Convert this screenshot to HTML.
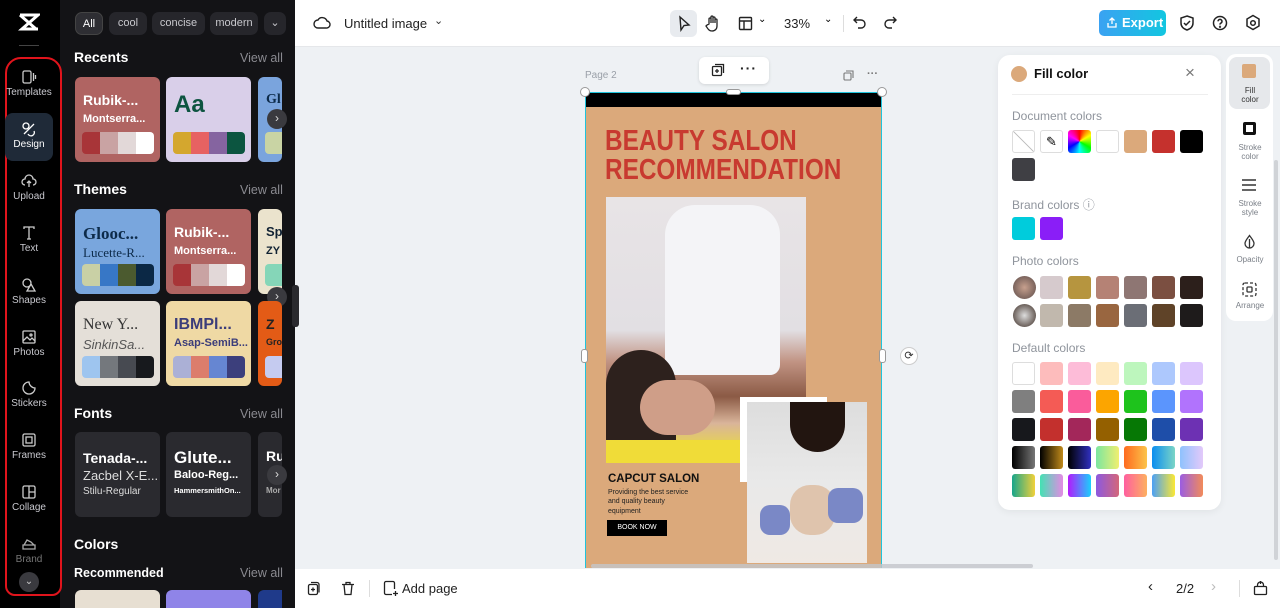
<!DOCTYPE html>
<html style="width:1280px;height:608px;overflow:hidden"><head><meta charset="utf-8"><style>
*{margin:0;padding:0;box-sizing:border-box}
body{width:1280px;height:608px;overflow:hidden;position:relative;font-family:"Liberation Sans",sans-serif;background:#eef1f4}
.a{position:absolute}
.rail{left:0;top:0;width:60px;height:608px;background:#000}
.panel{left:60px;top:0;width:235px;height:608px;background:#131316}
.ri{position:absolute;left:4px;width:50px;text-align:center;color:#c9c9cf;font-size:10px}
.ri svg{display:block;margin:0 auto 2px}
.chip{position:absolute;top:12px;height:23px;border-radius:7px;background:#26262b;color:#c8c8cd;font-size:11px;line-height:23px;text-align:center}
.h{position:absolute;left:74px;color:#fff;font-weight:bold;font-size:14px}
.va{position:absolute;left:240px;color:#8a8a90;font-size:12.5px}
.card{position:absolute;width:85px;height:85px;border-radius:6px;overflow:hidden}
.card .t1{position:absolute;left:8px;top:15px;font-weight:bold;font-size:14px;white-space:nowrap}
.card .t2{position:absolute;left:8px;top:36px;font-size:11px;white-space:nowrap;font-weight:bold}
.pal{position:absolute;left:7px;top:55px;width:72px;height:22px;border-radius:4px;overflow:hidden;display:flex}
.pal i{flex:1}
.arr{position:absolute;width:20px;height:20px;border-radius:50%;background:#3a3a3f;color:#ddd;font-size:12px;text-align:center;line-height:19px}
.top{left:295px;top:0;width:985px;height:47px;background:#fff;border-bottom:1px solid #e5e7ea}
.bot{left:295px;top:569px;width:985px;height:39px;background:#fff}
.sw{position:absolute;width:23px;height:23px;border-radius:3px}
.lbl{position:absolute;left:1012px;color:#8f949c;font-size:12px}
.tool{position:absolute;left:1229px;width:42px;text-align:center;font-size:8px;color:#7a7f87;line-height:9px}
</style></head><body>
<div class="a rail"></div>
<div class="a panel"></div>
<svg class="a" style="left:18px;top:13px" width="22" height="18" viewBox="0 0 22 18"><path d="M2 2h18l-16 14h16M2 2l16 14M20 2L4 16" stroke="#fff" stroke-width="3" fill="none"/></svg>
<div class="a" style="left:19px;top:45px;width:20px;height:1px;background:#444"></div>
<div class="a" style="left:5px;top:57px;width:57px;height:539px;border:2px solid #e0141c;border-radius:16px 16px 10px 10px"></div>
<div class="a" style="left:5px;top:113px;width:48px;height:48px;background:#1f2a38;border-radius:8px"></div>
<div class="ri" style="top:69px"><svg width="16" height="16" viewBox="0 0 16 16" fill="none" stroke="#ccc" stroke-width="1.3"><rect x="2" y="2" width="8" height="12" rx="1.5"/><path d="M12.5 4v8M14.5 6v4"/></svg>Templates</div>
<div class="ri" style="top:121px;color:#fff"><svg width="16" height="16" viewBox="0 0 16 16" fill="none" stroke="#fff" stroke-width="1.3"><circle cx="5" cy="5" r="3"/><path d="M3 13l10-10M7 13a3 3 0 1 0 6-3"/></svg>Design</div>
<div class="ri" style="top:173px"><svg width="16" height="16" viewBox="0 0 16 16" fill="none" stroke="#ccc" stroke-width="1.3"><path d="M4 12a3 3 0 0 1 0-6 4 4 0 0 1 8 0 3 3 0 0 1 0 6M8 14V8M6 10l2-2 2 2"/></svg>Upload</div>
<div class="ri" style="top:225px"><svg width="16" height="16" viewBox="0 0 16 16" fill="none" stroke="#ccc" stroke-width="1.3"><path d="M3 4V2h10v2M8 2v12M6 14h4"/></svg>Text</div>
<div class="ri" style="top:277px"><svg width="16" height="16" viewBox="0 0 16 16" fill="none" stroke="#ccc" stroke-width="1.3"><circle cx="6" cy="6" r="4"/><path d="M10 7l4 7H6z"/></svg>Shapes</div>
<div class="ri" style="top:329px"><svg width="16" height="16" viewBox="0 0 16 16" fill="none" stroke="#ccc" stroke-width="1.3"><rect x="2" y="2" width="12" height="12" rx="1"/><path d="M2 12l4-4 3 3 2-2 3 3"/><circle cx="10" cy="6" r="1"/></svg>Photos</div>
<div class="ri" style="top:380px"><svg width="16" height="16" viewBox="0 0 16 16" fill="none" stroke="#ccc" stroke-width="1.3"><path d="M8 2a6 6 0 1 0 6 6c-3 0-6-3-6-6z"/></svg>Stickers</div>
<div class="ri" style="top:432px"><svg width="16" height="16" viewBox="0 0 16 16" fill="none" stroke="#ccc" stroke-width="1.3"><rect x="2" y="2" width="12" height="12" rx="1.5"/><rect x="5" y="5" width="6" height="6"/></svg>Frames</div>
<div class="ri" style="top:484px"><svg width="16" height="16" viewBox="0 0 16 16" fill="none" stroke="#ccc" stroke-width="1.3"><rect x="2" y="2" width="12" height="12" rx="1.5"/><path d="M8 2v12M8 8h6"/></svg>Collage</div>
<div class="ri" style="top:536px;color:#777"><svg width="16" height="16" viewBox="0 0 16 16" fill="none" stroke="#aaa" stroke-width="1.3"><path d="M2 9h12v4H2zM3 9l3-5 4 2 3 3"/></svg>Brand</div>
<div class="a" style="left:19px;top:572px;width:20px;height:20px;border-radius:50%;background:#3a3a3f;color:#ccc;font-size:10px;text-align:center;line-height:20px">⌄</div>

<div class="chip" style="left:75px;width:28px;background:#2e2e33;border:1px solid #444;color:#fff">All</div>
<div class="chip" style="left:109px;width:38px">cool</div>
<div class="chip" style="left:152px;width:53px">concise</div>
<div class="chip" style="left:210px;width:48px;overflow:hidden">modern</div>
<div class="chip" style="left:264px;width:22px">⌄</div>

<div class="h" style="top:49px">Recents</div><div class="va" style="top:51px">View all</div>
<div class="card" style="left:75px;top:77px;background:#b06462;color:#fff"><div class="t1">Rubik-...</div><div class="t2">Montserra...</div><div class="pal"><i style="background:#a83538"></i><i style="background:#c9a3a3"></i><i style="background:#e2d8d8"></i><i style="background:#fff"></i></div></div>
<div class="card" style="left:166px;top:77px;background:#d9cfe9;color:#0d5440"><div class="t1" style="font-size:24px;top:14px">Aa</div><div class="pal"><i style="background:#d4a72e"></i><i style="background:#e76262"></i><i style="background:#8564a0"></i><i style="background:#0c5540"></i></div></div>
<div class="card" style="left:258px;top:77px;width:24px;background:#7aa4dd;color:#0d2b4a"><div class="t1" style="font-family:'Liberation Serif'">Gl</div><div class="pal" style="background:#c9d4a4"></div></div>
<div class="arr" style="left:267px;top:109px">›</div>

<div class="h" style="top:181px">Themes</div><div class="va" style="top:183px">View all</div>
<div class="card" style="left:75px;top:209px;background:#79a6dd;color:#0d2b4a"><div class="t1" style="font-family:'Liberation Serif';font-size:17px">Glooc...</div><div class="t2" style="font-family:'Liberation Serif';font-weight:normal;font-size:13px">Lucette-R...</div><div class="pal"><i style="background:#c9d0a5"></i><i style="background:#3777c6"></i><i style="background:#4b5a2f"></i><i style="background:#0b2845"></i></div></div>
<div class="card" style="left:166px;top:209px;background:#b06462;color:#fff"><div class="t1">Rubik-...</div><div class="t2">Montserra...</div><div class="pal"><i style="background:#a83538"></i><i style="background:#c9a3a3"></i><i style="background:#e2d8d8"></i><i style="background:#fff"></i></div></div>
<div class="card" style="left:258px;top:209px;width:24px;background:#ebe3cd;color:#123"><div class="t1" style="font-size:13px">Sp</div><div class="t2">ZY</div><div class="pal" style="background:#85d6b8"></div></div>
<div class="arr" style="left:267px;top:287px">›</div>
<div class="card" style="left:75px;top:301px;background:#e4dfd8;color:#333"><div class="t1" style="font-family:'Liberation Serif';font-weight:normal;font-size:16px">New Y...</div><div class="t2" style="font-style:italic;font-weight:normal;font-size:13px;color:#555">SinkinSa...</div><div class="pal"><i style="background:#9ec5ef"></i><i style="background:#74787d"></i><i style="background:#474a51"></i><i style="background:#17191d"></i></div></div>
<div class="card" style="left:166px;top:301px;background:#efd9a4;color:#3b3d7a"><div class="t1" style="font-size:16px">IBMPl...</div><div class="t2">Asap-SemiB...</div><div class="pal"><i style="background:#abb0d6"></i><i style="background:#dc7d6c"></i><i style="background:#6686d2"></i><i style="background:#3c3f7c"></i></div></div>
<div class="card" style="left:258px;top:301px;width:24px;background:#e35b16;color:#222"><div class="t1">Z</div><div class="t2" style="font-size:9px">Gro</div><div class="pal" style="background:#c5cbf0"></div></div>

<div class="h" style="top:405px">Fonts</div><div class="va" style="top:407px">View all</div>
<div class="card" style="left:75px;top:432px;background:#2a2a2f;color:#fff"><div class="t1" style="top:18px">Tenada-...</div><div class="t2" style="font-weight:normal;font-size:13px;top:36px;color:#ddd">Zacbel X-E...</div><div class="t2" style="font-weight:normal;font-size:10px;top:54px;color:#ddd">Stilu-Regular</div></div>
<div class="card" style="left:166px;top:432px;background:#2a2a2f;color:#fff"><div class="t1" style="top:16px;font-size:17px">Glute...</div><div class="t2" style="top:37px">Baloo-Reg...</div><div class="t2" style="top:54px;font-size:7.5px">HammersmithOn...</div></div>
<div class="card" style="left:258px;top:432px;width:24px;background:#2a2a2f;color:#fff"><div class="t1" style="top:16px">Ru</div><div class="t2" style="top:54px;font-size:8px;color:#aaa">Mor</div></div>
<div class="arr" style="left:267px;top:465px">›</div>

<div class="h" style="top:536px">Colors</div>
<div class="h" style="top:566px;font-size:12.5px">Recommended</div><div class="va" style="top:566px">View all</div>
<div class="card" style="left:75px;top:590px;height:18px;border-radius:6px 6px 0 0;background:#e7dfd2"></div>
<div class="card" style="left:166px;top:590px;height:18px;border-radius:6px 6px 0 0;background:#8f84e8"></div>
<div class="card" style="left:258px;top:590px;height:18px;width:24px;border-radius:6px 0 0 0;background:#1f3a8a"></div>
<div class="a" style="left:292px;top:285px;width:7px;height:42px;background:#2a2a2e;border-radius:3px"></div>

<div class="a top"></div>
<svg class="a" style="left:313px;top:15px" width="18" height="16" viewBox="0 0 18 16" fill="none" stroke="#222" stroke-width="1.4"><path d="M5 13a4 4 0 0 1 0-8 5 5 0 0 1 9 1 3.5 3.5 0 0 1-1 7z"/></svg>
<div class="a" style="left:344px;top:16px;font-size:13px;color:#222">Untitled image</div>
<div class="a" style="left:434px;top:14px;font-size:11px;color:#333">⌄</div>
<div class="a" style="left:670px;top:10px;width:27px;height:27px;border-radius:6px;background:#e8ebef"></div>
<svg class="a" style="left:676px;top:15px" width="16" height="17" viewBox="0 0 16 17" fill="none" stroke="#222" stroke-width="1.4"><path d="M4 2l9 8-5 .5L5 15z"/></svg>
<svg class="a" style="left:705px;top:14px" width="16" height="18" viewBox="0 0 16 18" fill="none" stroke="#222" stroke-width="1.3"><path d="M4 10V5a1 1 0 0 1 2 0v4V3a1 1 0 0 1 2 0v6V4a1 1 0 0 1 2 0v5-3a1 1 0 0 1 2 0v6c0 3-2 5-5 5s-4-2-6-5l1-1z"/></svg>
<svg class="a" style="left:738px;top:16px" width="15" height="15" viewBox="0 0 15 15" fill="none" stroke="#222" stroke-width="1.4"><rect x="1.5" y="1.5" width="12" height="12" rx="1"/><path d="M1.5 5h12M6 5v8.5"/></svg>
<div class="a" style="left:758px;top:14px;font-size:10px">⌄</div>
<div class="a" style="left:784px;top:16px;font-size:13px;color:#222">33%</div>
<div class="a" style="left:824px;top:14px;font-size:10px">⌄</div>
<div class="a" style="left:843px;top:15px;width:1px;height:17px;background:#ddd"></div>
<svg class="a" style="left:853px;top:15px" width="14" height="16" viewBox="0 0 14 16" fill="none" stroke="#222" stroke-width="1.4"><path d="M4 2L1 5l3 3M1 5h7a4 4 0 0 1 0 8H5"/></svg>
<svg class="a" style="left:883px;top:15px" width="14" height="16" viewBox="0 0 14 16" fill="none" stroke="#222" stroke-width="1.4"><path d="M10 2l3 3-3 3M13 5H6a4 4 0 0 0 0 8h3"/></svg>
<div class="a" style="left:1099px;top:10px;width:67px;height:26px;border-radius:5px;background:linear-gradient(90deg,#3aa2f2,#12c6e0);color:#fff;font-size:13px;font-weight:bold;line-height:26px;padding-left:23px">Export</div>
<svg class="a" style="left:1106px;top:16px" width="12" height="13" viewBox="0 0 12 13" fill="none" stroke="#fff" stroke-width="1.3"><path d="M6 8V2M3.5 4.5L6 2l2.5 2.5M2 7v4h8V7"/></svg>
<svg class="a" style="left:1179px;top:14px" width="16" height="18" viewBox="0 0 16 18" fill="none" stroke="#222" stroke-width="1.5"><path d="M8 2l6 2v5c0 4-3 6-6 7-3-1-6-3-6-7V4z"/><path d="M5 9l2 2 4-4"/></svg>
<svg class="a" style="left:1212px;top:15px" width="16" height="16" viewBox="0 0 16 16" fill="none" stroke="#222" stroke-width="1.5"><circle cx="8" cy="8" r="6.5"/><path d="M6 6.3a2 2 0 1 1 2.5 2c-.5.2-.5.7-.5 1.3"/><circle cx="8" cy="11.8" r=".4"/></svg>
<svg class="a" style="left:1245px;top:14px" width="16" height="18" viewBox="0 0 16 18" fill="none" stroke="#222" stroke-width="1.5"><path d="M8 1.5l6 3.5v7l-6 3.5-6-3.5V5z"/><circle cx="8" cy="9" r="2.3"/></svg>

<div class="a" style="left:585px;top:70px;font-size:10px;color:#9aa0a8">Page 2</div>
<div class="a" style="left:699px;top:57px;width:70px;height:27px;background:#fff;border-radius:6px;box-shadow:0 1px 3px rgba(0,0,0,.12)"></div>
<svg class="a" style="left:711px;top:63px" width="14" height="14" viewBox="0 0 14 14" fill="none" stroke="#222" stroke-width="1.3"><rect x="1.5" y="3.5" width="9" height="9" rx="1"/><path d="M4 1.5h8.5V10M6 6v4M4 8h4"/></svg>
<div class="a" style="left:740px;top:60px;font-size:14px;font-weight:bold;color:#222;letter-spacing:1px">···</div>
<svg class="a" style="left:843px;top:70px" width="12" height="12" viewBox="0 0 12 12" fill="none" stroke="#777" stroke-width="1.1"><rect x="1" y="3" width="7" height="7" rx="1"/><path d="M3 1h7v7"/></svg>
<div class="a" style="left:867px;top:68px;font-size:11px;color:#777;font-weight:bold">···</div>
<div class="a" style="left:585px;top:92px;width:297px;height:476px;background:#dba97b;border:1.5px solid #20c4dc;border-bottom:none"></div>
<div class="a" style="left:586px;top:93px;width:295px;height:14px;background:#000"></div>
<div class="a" style="left:605px;top:127px;font-size:29px;line-height:29px;font-weight:bold;color:#c83a30;white-space:nowrap;transform:scaleX(0.84);transform-origin:left">BEAUTY SALON<br>RECOMMENDATION</div>
<div class="a" style="left:606px;top:197px;width:200px;height:266px;background:linear-gradient(180deg,#e8e4e6 0%,#e2dfe3 50%,#c19383 62%,#8b5a45 75%,#d9b49a 85%,#e8d846 95%,#ecd83a 100%)"></div>
<div class="a" style="left:665px;top:205px;width:115px;height:170px;background:#f4f4f7;border-radius:30px 30px 10px 10px"></div>
<div class="a" style="left:606px;top:350px;width:70px;height:90px;background:#2d211d;border-radius:40px 40px 0 0"></div>
<div class="a" style="left:640px;top:380px;width:75px;height:55px;background:#cf9e88;border-radius:30px"></div>
<div class="a" style="left:606px;top:440px;width:200px;height:23px;background:#f0dc38"></div>
<div class="a" style="left:740px;top:397px;width:87px;height:85px;background:#fff"></div>
<div class="a" style="left:747px;top:402px;width:120px;height:161px;background:linear-gradient(180deg,#ddd 0%,#e9e9e9 50%,#efe9e4 100%)"></div>
<div class="a" style="left:790px;top:402px;width:55px;height:50px;background:#221510;border-radius:0 0 30px 30px"></div>
<div class="a" style="left:790px;top:485px;width:45px;height:50px;background:#dfc4ad;border-radius:20px"></div>
<div class="a" style="left:760px;top:505px;width:30px;height:30px;background:#7a88c6;border-radius:10px"></div>
<div class="a" style="left:828px;top:488px;width:35px;height:35px;background:#7a88c6;border-radius:10px"></div>
<div class="a" style="left:608px;top:473px;font-size:11.5px;font-weight:bold;color:#111">CAPCUT SALON</div>
<div class="a" style="left:608px;top:488px;font-size:7px;color:#222;line-height:9.3px">Providing the best service<br>and quality beauty<br>equipment</div>
<div class="a" style="left:607px;top:520px;width:60px;height:16px;background:#000;color:#fff;font-size:7px;line-height:16px;text-align:center">BOOK NOW</div>
<div class="a" style="left:591px;top:564px;width:442px;height:4px;background:#c3c6ca;border-radius:2px;opacity:.8"></div>
<div class="a" style="left:580px;top:87px;width:10px;height:10px;border-radius:50%;background:#fff;border:1px solid #999"></div>
<div class="a" style="left:877px;top:87px;width:10px;height:10px;border-radius:50%;background:#fff;border:1px solid #999"></div>
<div class="a" style="left:726px;top:89px;width:15px;height:6px;border-radius:3px;background:#fff;border:1px solid #999"></div>
<div class="a" style="left:581px;top:349px;width:7px;height:14px;border-radius:3px;background:#fff;border:1px solid #999"></div>
<div class="a" style="left:879px;top:349px;width:7px;height:14px;border-radius:3px;background:#fff;border:1px solid #999"></div>
<div class="a" style="left:900px;top:347px;width:18px;height:18px;border-radius:50%;background:#fff;border:1px solid #ccc;font-size:11px;text-align:center;line-height:16px;color:#333">⟳</div>

<div class="a" style="left:998px;top:55px;width:223px;height:455px;background:#fff;border-radius:12px;box-shadow:0 2px 8px rgba(0,0,0,.06)"></div>
<div class="a" style="left:1011px;top:66px;width:16px;height:16px;border-radius:50%;background:#dba97b"></div>
<div class="a" style="left:1034px;top:66px;font-size:13px;font-weight:bold;color:#111">Fill color</div>
<div class="a" style="left:1185px;top:63px;font-size:17px;color:#777">×</div>
<div class="a" style="left:1012px;top:94px;width:196px;height:1px;background:#eee"></div>
<div class="lbl" style="top:109px">Document colors</div>
<div class="sw" style="left:1012px;top:130px;border:1px solid #ddd;background:linear-gradient(45deg,#fff 48%,#bbb 49%,#bbb 51%,#fff 52%)"></div>
<div class="sw" style="left:1040px;top:130px;border:1px solid #ddd;font-size:13px;text-align:center;line-height:21px">✎</div>
<div class="sw" style="left:1068px;top:130px;background:conic-gradient(red,#ff0,#0f0,#0ff,#00f,#f0f,red)"></div>
<div class="sw" style="left:1096px;top:130px;border:1px solid #ddd;background:#fff"></div>
<div class="sw" style="left:1124px;top:130px;background:#dba97b"></div>
<div class="sw" style="left:1152px;top:130px;background:#c5312d"></div>
<div class="sw" style="left:1180px;top:130px;background:#000"></div>
<div class="sw" style="left:1012px;top:158px;background:#3f3f44"></div>
<div class="lbl" style="top:196px">Brand colors ⓘ</div>
<div class="sw" style="left:1012px;top:217px;background:#00ccdc"></div>
<div class="sw" style="left:1040px;top:217px;background:#8a1ef7"></div>
<div class="lbl" style="top:254px">Photo colors</div>
<div class="sw" style="left:1013px;top:276px;border-radius:50%;background:radial-gradient(#c7a08e,#5a4a48)"></div>
<div class="sw" style="left:1040px;top:276px;background:#d6cacd"></div>
<div class="sw" style="left:1068px;top:276px;background:#b6953f"></div>
<div class="sw" style="left:1096px;top:276px;background:#b58275"></div>
<div class="sw" style="left:1124px;top:276px;background:#8e7673"></div>
<div class="sw" style="left:1152px;top:276px;background:#7b4f41"></div>
<div class="sw" style="left:1180px;top:276px;background:#2c1f1b"></div>
<div class="sw" style="left:1013px;top:304px;border-radius:50%;background:radial-gradient(#ddd,#3a2a22)"></div>
<div class="sw" style="left:1040px;top:304px;background:#c1b8ad"></div>
<div class="sw" style="left:1068px;top:304px;background:#8c7a66"></div>
<div class="sw" style="left:1096px;top:304px;background:#996640"></div>
<div class="sw" style="left:1124px;top:304px;background:#6b6e76"></div>
<div class="sw" style="left:1152px;top:304px;background:#5f4328"></div>
<div class="sw" style="left:1180px;top:304px;background:#1e1b1b"></div>
<div class="lbl" style="top:341px">Default colors</div>
<div class="sw" style="left:1012px;top:362px;background:#fff;border:1px solid #ddd"></div>
<div class="sw" style="left:1040px;top:362px;background:#fdbcbc"></div>
<div class="sw" style="left:1068px;top:362px;background:#fdbcd8"></div>
<div class="sw" style="left:1096px;top:362px;background:#feeac1"></div>
<div class="sw" style="left:1124px;top:362px;background:#bdf6bd"></div>
<div class="sw" style="left:1152px;top:362px;background:#adc8fd"></div>
<div class="sw" style="left:1180px;top:362px;background:#dcc6fd"></div>
<div class="sw" style="left:1012px;top:390px;background:#7f7f7f"></div>
<div class="sw" style="left:1040px;top:390px;background:#f45b55"></div>
<div class="sw" style="left:1068px;top:390px;background:#fa5c9b"></div>
<div class="sw" style="left:1096px;top:390px;background:#fca500"></div>
<div class="sw" style="left:1124px;top:390px;background:#1ec31c"></div>
<div class="sw" style="left:1152px;top:390px;background:#5b95fd"></div>
<div class="sw" style="left:1180px;top:390px;background:#b173fd"></div>
<div class="sw" style="left:1012px;top:418px;background:#17181c"></div>
<div class="sw" style="left:1040px;top:418px;background:#c3302d"></div>
<div class="sw" style="left:1068px;top:418px;background:#a3275a"></div>
<div class="sw" style="left:1096px;top:418px;background:#946000"></div>
<div class="sw" style="left:1124px;top:418px;background:#067805"></div>
<div class="sw" style="left:1152px;top:418px;background:#1e4ea9"></div>
<div class="sw" style="left:1180px;top:418px;background:#6d31b3"></div>
<div class="sw" style="left:1012px;top:446px;background:linear-gradient(90deg,#000,#777)"></div>
<div class="sw" style="left:1040px;top:446px;background:linear-gradient(90deg,#000,#c08a1a)"></div>
<div class="sw" style="left:1068px;top:446px;background:linear-gradient(90deg,#000,#3030c0)"></div>
<div class="sw" style="left:1096px;top:446px;background:linear-gradient(90deg,#7be6a0,#f0ef70)"></div>
<div class="sw" style="left:1124px;top:446px;background:linear-gradient(90deg,#fe6a1f,#fcc44a)"></div>
<div class="sw" style="left:1152px;top:446px;background:linear-gradient(90deg,#0b8ef0,#7bd5c6)"></div>
<div class="sw" style="left:1180px;top:446px;background:linear-gradient(90deg,#8fc2fd,#e3c9fa)"></div>
<div class="sw" style="left:1012px;top:474px;background:linear-gradient(90deg,#17a58b,#f1d13a)"></div>
<div class="sw" style="left:1040px;top:474px;background:linear-gradient(90deg,#43e2b3,#e48ae4)"></div>
<div class="sw" style="left:1068px;top:474px;background:linear-gradient(90deg,#b31afc,#1ad0fc)"></div>
<div class="sw" style="left:1096px;top:474px;background:linear-gradient(90deg,#8c59e0,#d4667a)"></div>
<div class="sw" style="left:1124px;top:474px;background:linear-gradient(90deg,#fe5f9f,#fdb060)"></div>
<div class="sw" style="left:1152px;top:474px;background:linear-gradient(90deg,#4ba0f5,#fbe834)"></div>
<div class="sw" style="left:1180px;top:474px;background:linear-gradient(90deg,#9a5de2,#f28b5a)"></div>

<div class="a" style="left:1226px;top:54px;width:47px;height:267px;background:#fff;border-radius:10px"></div>
<div class="a" style="left:1229px;top:57px;width:41px;height:52px;background:#e6e8eb;border-radius:8px"></div>
<div class="a" style="left:1242px;top:64px;width:14px;height:14px;border-radius:2px;background:#dba97b"></div>
<div class="tool" style="top:86px;color:#333">Fill<br>color</div>
<div class="a" style="left:1243px;top:122px;width:13px;height:13px;border:3px solid #111;border-radius:2px"></div>
<div class="tool" style="top:143px">Stroke<br>color</div>
<svg class="a" style="left:1241px;top:178px" width="16" height="14" viewBox="0 0 16 14" stroke="#333" stroke-width="1.6"><path d="M1 2h14M1 7h14M1 12h14"/></svg>
<div class="tool" style="top:199px">Stroke<br>style</div>
<svg class="a" style="left:1243px;top:234px" width="13" height="15" viewBox="0 0 13 15" fill="none" stroke="#333" stroke-width="1.3"><path d="M6.5 1.5C4 5 2 7 2 9.5a4.5 4.5 0 0 0 9 0C11 7 9 5 6.5 1.5zM6.5 5v9"/></svg>
<div class="tool" style="top:255px">Opacity</div>
<svg class="a" style="left:1242px;top:282px" width="15" height="15" viewBox="0 0 15 15" fill="none" stroke="#333" stroke-width="1.3"><rect x="1" y="1" width="13" height="13" rx="2" stroke-dasharray="3 2"/><rect x="5" y="5" width="5" height="5" rx="1"/></svg>
<div class="tool" style="top:301px">Arrange</div>
<div class="a" style="left:1274px;top:160px;width:4px;height:400px;background:#d0d3d7;border-radius:2px"></div>

<div class="a bot"></div>
<svg class="a" style="left:307px;top:581px" width="14" height="15" viewBox="0 0 14 15" fill="none" stroke="#222" stroke-width="1.3"><rect x="1.5" y="3.5" width="9" height="10" rx="1.5"/><path d="M4 1.5h6a2 2 0 0 1 2 2v8M6 6.5v4M4 8.5h4"/></svg>
<svg class="a" style="left:341px;top:581px" width="14" height="15" viewBox="0 0 14 15" fill="none" stroke="#222" stroke-width="1.3"><path d="M1 3.5h12M5 3.5V1.5h4v2M3 3.5l1 10h6l1-10"/></svg>
<div class="a" style="left:369px;top:580px;width:1px;height:17px;background:#ddd"></div>
<svg class="a" style="left:383px;top:580px" width="16" height="17" viewBox="0 0 16 17" fill="none" stroke="#222" stroke-width="1.3"><path d="M9 14.5H3a1.5 1.5 0 0 1-1.5-1.5V3A1.5 1.5 0 0 1 3 1.5h7A1.5 1.5 0 0 1 11.5 3v6M12.5 11v5M10 13.5h5"/></svg>
<div class="a" style="left:402px;top:581px;font-size:13px;color:#222">Add page</div>
<div class="a" style="left:1148px;top:578px;font-size:15px;color:#222">‹</div>
<div class="a" style="left:1176px;top:581px;font-size:13px;color:#222">2/2</div>
<div class="a" style="left:1211px;top:578px;font-size:15px;color:#bbb">›</div>
<div class="a" style="left:1239px;top:580px;width:1px;height:17px;background:#ddd"></div>
<svg class="a" style="left:1253px;top:580px" width="15" height="16" viewBox="0 0 15 16" fill="none" stroke="#222" stroke-width="1.3"><rect x="1.5" y="6.5" width="12" height="8" rx="1"/><path d="M4.5 6.5V5a3 3 0 0 1 6 0v1.5M7.5 1v3"/></svg>
</body></html>
